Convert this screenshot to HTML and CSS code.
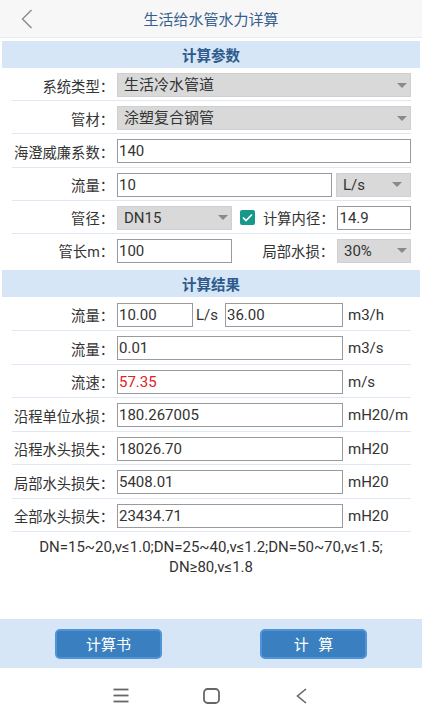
FILE: index.html
```html
<!DOCTYPE html>
<html lang="zh-CN">
<head>
<meta charset="utf-8">
<title>生活给水管水力详算</title>
<link rel="stylesheet" href="styles.css">
</head>
<body>
<div class="app">
  <header class="topbar">
    <span class="back">
      <svg width="12" height="20" viewBox="0 0 12 20"><polyline points="10.5,1 1.5,10 10.5,19" fill="none" stroke="#8a8a8a" stroke-width="1.4"/></svg>
    </span>
    <h1 class="title">生活给水管水力详算</h1>
    <span></span>
  </header>

  <main class="content">
    <div class="section-title">计算参数</div>
    <div class="form">
      <div class="row">
        <span class="label">系统类型：</span>
        <div class="select grow"><span>生活冷水管道</span><i class="arrow"></i></div>
      </div>
      <div class="row">
        <span class="label">管材：</span>
        <div class="select grow"><span>涂塑复合钢管</span><i class="arrow"></i></div>
      </div>
      <div class="row">
        <span class="label">海澄威廉系数：</span>
        <div class="field grow">140</div>
      </div>
      <div class="row">
        <span class="label">流量：</span>
        <div class="field grow">10</div>
        <div class="select unit-select"><span>L/s</span><i class="arrow"></i></div>
      </div>
      <div class="row">
        <span class="label">管径：</span>
        <div class="select half"><span>DN15</span><i class="arrow"></i></div>
        <span class="check">
          <svg width="11" height="9" viewBox="0 0 11 9"><polyline points="1,4.5 4,7.5 10,1.5" fill="none" stroke="#fff" stroke-width="1.6"/></svg>
        </span>
        <span class="label-inline">计算内径：</span>
        <div class="field grow">14.9</div>
      </div>
      <div class="row last">
        <span class="label">管长m：</span>
        <div class="field half">100</div>
        <span class="label-inline right">局部水损：</span>
        <div class="select small"><span>30%</span><i class="arrow"></i></div>
      </div>
    </div>

    <div class="section-title">计算结果</div>
    <div class="results">
      <div class="row rrow">
        <span class="label">流量：</span>
        <div class="field short">10.00</div>
        <span class="unit mid">L/s</span>
        <div class="field medium">36.00</div>
        <span class="unit">m3/h</span>
      </div>
      <div class="row rrow">
        <span class="label">流量：</span>
        <div class="field wide">0.01</div>
        <span class="unit">m3/s</span>
      </div>
      <div class="row rrow">
        <span class="label">流速：</span>
        <div class="field wide warn">57.35</div>
        <span class="unit">m/s</span>
      </div>
      <div class="row rrow">
        <span class="label">沿程单位水损：</span>
        <div class="field wide">180.267005</div>
        <span class="unit">mH20/m</span>
      </div>
      <div class="row rrow">
        <span class="label">沿程水头损失：</span>
        <div class="field wide">18026.70</div>
        <span class="unit">mH20</span>
      </div>
      <div class="row rrow">
        <span class="label">局部水头损失：</span>
        <div class="field wide">5408.01</div>
        <span class="unit">mH20</span>
      </div>
      <div class="row rrow">
        <span class="label">全部水头损失：</span>
        <div class="field wide">23434.71</div>
        <span class="unit">mH20</span>
      </div>
    </div>
    <p class="note">DN=15~20,v≤1.0;DN=25~40,v≤1.2;DN=50~70,v≤1.5;<br>DN≥80,v≤1.8</p>
  </main>

  <div class="actions">
    <button class="btn">计算书</button>
    <button class="btn spaced">计 算</button>
  </div>

  <nav class="sysnav">
    <span class="navitem">
      <svg width="16" height="15" viewBox="0 0 16 15"><g stroke="#666" stroke-width="1.8"><line x1="0.5" y1="1.5" x2="15.5" y2="1.5"/><line x1="0.5" y1="7.5" x2="15.5" y2="7.5"/><line x1="0.5" y1="13.5" x2="15.5" y2="13.5"/></g></svg>
    </span>
    <span class="navitem">
      <svg width="17" height="16" viewBox="0 0 17 16"><rect x="1" y="1" width="15" height="14" rx="3.5" fill="none" stroke="#666" stroke-width="1.8"/></svg>
    </span>
    <span class="navitem">
      <svg width="11" height="16" viewBox="0 0 11 16"><polyline points="10,1 1.5,8 10,15" fill="none" stroke="#666" stroke-width="1.6"/></svg>
    </span>
  </nav>
</div>
</body>
</html>
```

FILE: styles.css
```css
* { box-sizing: border-box; }

html, body {
  margin: 0;
  padding: 0;
  background: #fff;
}

body {
  font-family: Roboto, "Noto Sans CJK SC", sans-serif;
  color: #333;
}

.app {
  width: 422px;
  height: 720px;
  display: flex;
  flex-direction: column;
}

.topbar {
  height: 38px;
  flex: none;
  background: #f7f7f7;
  border-bottom: 1px solid #ececec;
  display: grid;
  grid-template-columns: 50px 1fr 50px;
  align-items: center;
}

.back {
  padding-left: 21px;
  display: flex;
  align-items: center;
}

.title {
  margin: 0;
  text-align: center;
  font-size: 15px;
  font-weight: normal;
  color: #35608e;
}

.content {
  flex: 1;
  display: flex;
  flex-direction: column;
}

.section-title {
  margin: 3px 2px 0;
  height: 27px;
  background: #d6e6f6;
  color: #2d5b8c;
  font-weight: bold;
  font-size: 14.5px;
  display: flex;
  align-items: center;
  justify-content: center;
}

.form + .section-title {
  margin-top: 0;
}

.row {
  display: flex;
  align-items: center;
  margin: 0 11px 0 12px;
  padding: 5px 0 3.2px;
  border-bottom: 1px solid #dde8f4;
}

.row.last {
  border-bottom: none;
  padding-bottom: 7px;
}

.results {
  margin-top: 1px;
}

.rrow {
  padding: 5px 0 3.5px;
}

.label {
  flex: none;
  width: 102px;
  margin-right: 3px;
  text-align: right;
  font-size: 14.3px;
  white-space: nowrap;
  color: #333;
}

.label-inline {
  flex: none;
  font-size: 14.3px;
  margin: 0 3px 0 8px;
  white-space: nowrap;
  color: #333;
}

.label-inline.right {
  flex: 1;
  text-align: right;
  margin: 0 3px 0 0;
}

.field {
  height: 24px;
  border: 1px solid #9a9a9a;
  background: #fff;
  font-size: 15px;
  line-height: 22px;
  padding: 0 1px;
  color: #333;
  white-space: nowrap;
  overflow: hidden;
}

.field.warn { color: #e3211f; }

.select {
  height: 24px;
  border: 1px solid #cfcfcf;
  background: #d9d9d9;
  font-size: 15px;
  line-height: 22px;
  padding: 0 3px 0 6px;
  display: flex;
  align-items: center;
  justify-content: space-between;
  color: #333;
}

.arrow {
  width: 0;
  height: 0;
  border-left: 5.5px solid transparent;
  border-right: 5.5px solid transparent;
  border-top: 5px solid #8a8a8a;
}

.grow { flex: 1; min-width: 0; }
.half { flex: none; width: 115px; }
.small { flex: none; width: 74px; }
.unit-select { flex: none; width: 75px; margin-left: 4px; padding-right: 8px; }

.check {
  flex: none;
  width: 15px;
  height: 15px;
  margin-left: 8px;
  border-radius: 2px;
  background: #17988a;
  display: flex;
  align-items: center;
  justify-content: center;
}

.short { flex: none; width: 76px; }
.medium { flex: none; width: 118px; }
.wide { flex: none; width: 226px; }

.unit {
  font-size: 15px;
  margin-left: 5px;
  white-space: nowrap;
  color: #333;
}

.unit.mid {
  width: 29px;
  margin: 0 0 0 3px;
}

.note {
  margin: 0;
  padding-top: 5px;
  text-align: center;
  font-size: 15px;
  line-height: 20px;
  color: #333;
}

.actions {
  flex: none;
  height: 49px;
  background: #d6e6f6;
  display: flex;
  align-items: center;
  justify-content: space-between;
  padding: 0 55px;
}

.btn {
  width: 107px;
  height: 30px;
  border: 2px solid #4f94da;
  border-radius: 5px;
  background: #3a7fc0;
  color: #fff;
  font-family: "Noto Sans CJK SC", sans-serif;
  font-size: 15px;
  padding: 0;
}

.btn.spaced { word-spacing: 6px; }

.sysnav {
  flex: none;
  height: 52px;
  background: #fff;
  display: flex;
  justify-content: center;
  align-items: center;
  padding-top: 3px;
}

.navitem {
  width: 90px;
  display: flex;
  justify-content: center;
}
```
